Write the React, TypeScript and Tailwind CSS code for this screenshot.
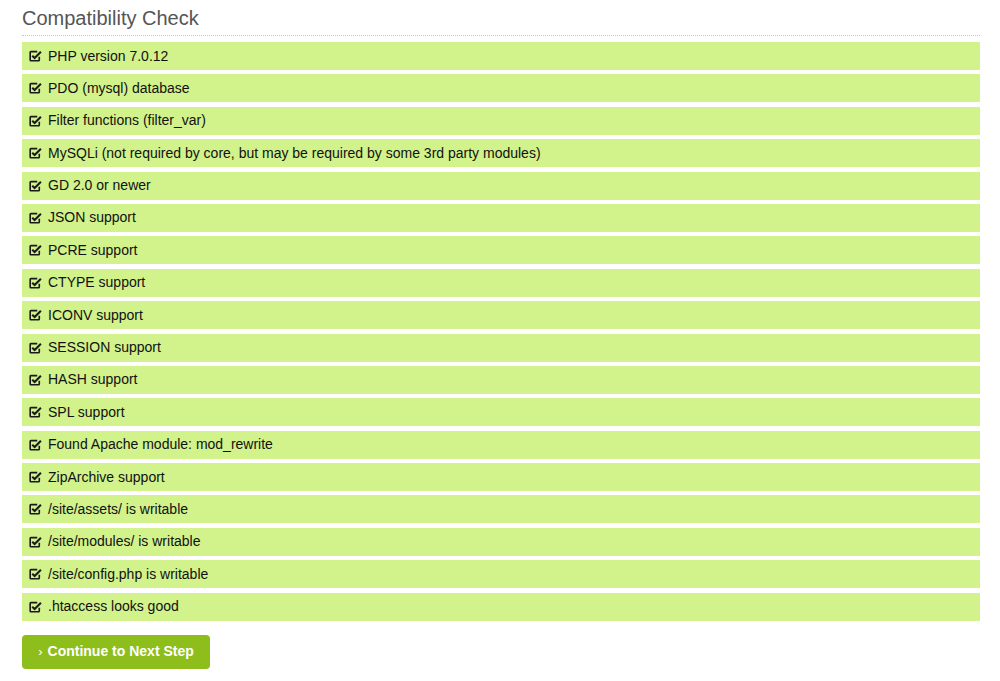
import React from "react";

const items = [
  "PHP version 7.0.12",
  "PDO (mysql) database",
  "Filter functions (filter_var)",
  "MySQLi (not required by core, but may be required by some 3rd party modules)",
  "GD 2.0 or newer",
  "JSON support",
  "PCRE support",
  "CTYPE support",
  "ICONV support",
  "SESSION support",
  "HASH support",
  "SPL support",
  "Found Apache module: mod_rewrite",
  "ZipArchive support",
  "/site/assets/ is writable",
  "/site/modules/ is writable",
  "/site/config.php is writable",
  ".htaccess looks good",
];

function CheckSquare() {
  return (
    <svg width="13" height="12" viewBox="0 0 12 11" className="shrink-0">
      <path d="M9.5 6.2V9.2Q9.5 9.9 8.8 9.9H1.8Q1.1 9.9 1.1 9.2V2.2Q1.1 1.5 1.8 1.5H7.6" fill="none" stroke="#1a1a1a" strokeWidth="1.5" />
      <path d="M3 5.3L5.2 7.4L11 1.6" fill="none" stroke="#1a1a1a" strokeWidth="1.9" />
    </svg>
  );
}

export default function App() {
  return (
    <div className="w-[1000px] h-[681px] bg-white px-[22px] pt-[6px]" style={{ fontFamily: '"Liberation Sans", Arial, sans-serif' }}>
      <h1 className="text-[20px] leading-[24px] text-[#555] pb-[5px] border-b border-dotted border-[#c8c8c8] w-[958px]">Compatibility Check</h1>
      <div className="flex flex-col gap-[4.4px] mt-[6px] w-[958px]">
        {items.map((t) => (
          <div key={t} className="h-[28px] bg-[#d2f28b] flex items-center pl-[7px] gap-[6px] text-[14px] text-[#111]">
            <CheckSquare />
            <span>{t}</span>
          </div>
        ))}
      </div>
      <button className="mt-[14px] h-[34px] w-[188px] rounded-[4px] bg-[#8dbe1c] text-white font-bold text-[14px] flex items-center justify-center gap-[5px]">
        <span className="font-normal text-[13px]">›</span>
        <span>Continue to Next Step</span>
      </button>
    </div>
  );
}
